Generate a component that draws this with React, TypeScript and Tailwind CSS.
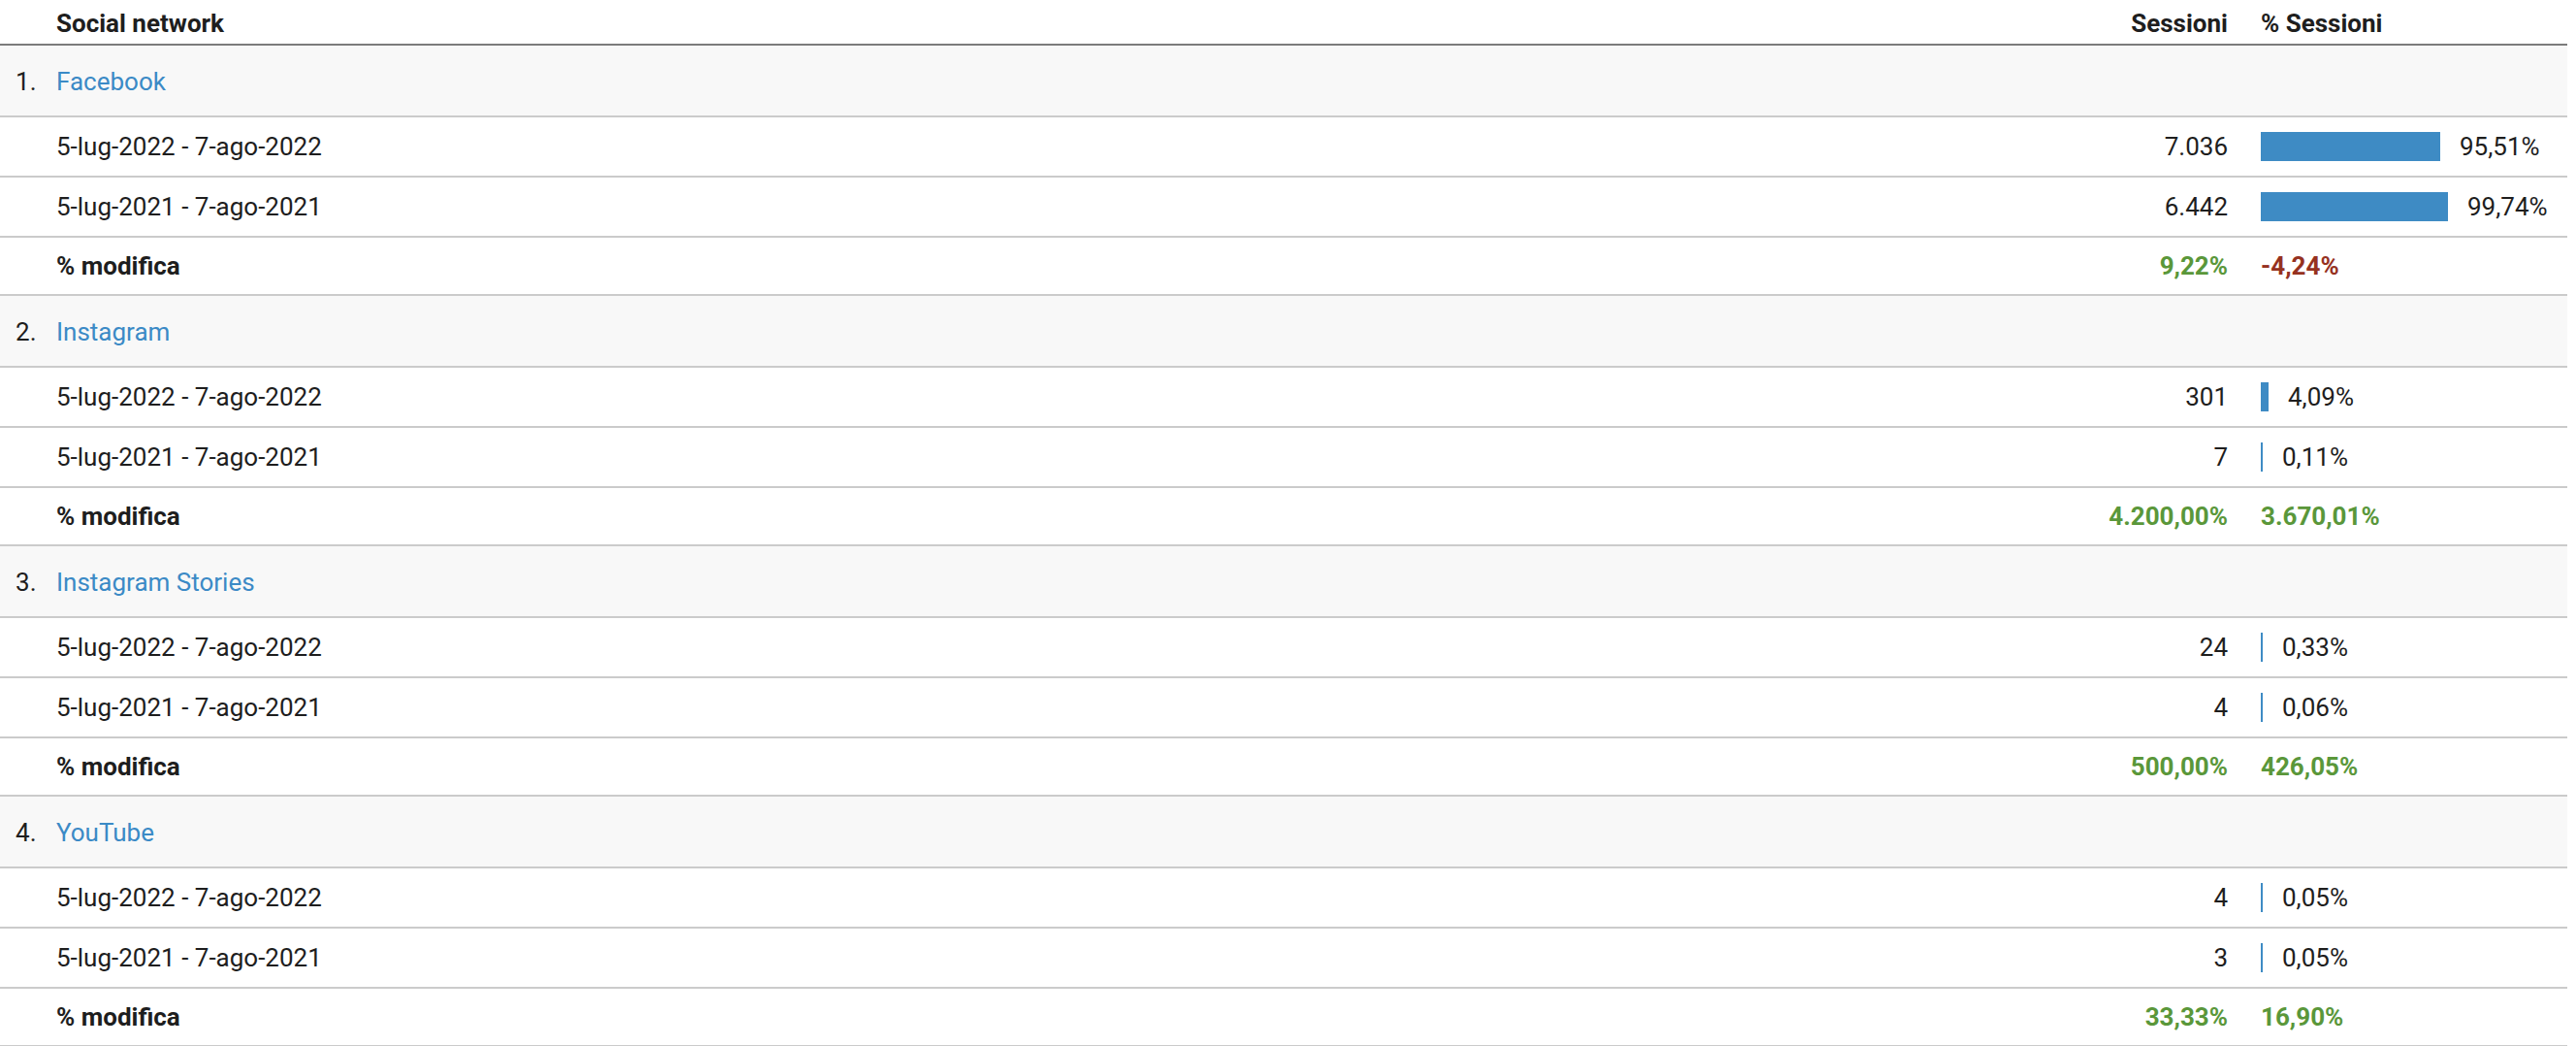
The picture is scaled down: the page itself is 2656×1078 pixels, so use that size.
import React from "react";

type DataRow = { label: string; sessions: string; pct: number; pctLabel: string };
type Group = {
  name: string;
  rows: DataRow[];
  changeSessions: string;
  changePct: string;
  changePctNegative?: boolean;
};

const groups: Group[] = [
  {
    name: "Facebook",
    rows: [
      { label: "5-lug-2022 - 7-ago-2022", sessions: "7.036", pct: 95.51, pctLabel: "95,51%" },
      { label: "5-lug-2021 - 7-ago-2021", sessions: "6.442", pct: 99.74, pctLabel: "99,74%" },
    ],
    changeSessions: "9,22%",
    changePct: "-4,24%",
    changePctNegative: true,
  },
  {
    name: "Instagram",
    rows: [
      { label: "5-lug-2022 - 7-ago-2022", sessions: "301", pct: 4.09, pctLabel: "4,09%" },
      { label: "5-lug-2021 - 7-ago-2021", sessions: "7", pct: 0.11, pctLabel: "0,11%" },
    ],
    changeSessions: "4.200,00%",
    changePct: "3.670,01%",
  },
  {
    name: "Instagram Stories",
    rows: [
      { label: "5-lug-2022 - 7-ago-2022", sessions: "24", pct: 0.33, pctLabel: "0,33%" },
      { label: "5-lug-2021 - 7-ago-2021", sessions: "4", pct: 0.06, pctLabel: "0,06%" },
    ],
    changeSessions: "500,00%",
    changePct: "426,05%",
  },
  {
    name: "YouTube",
    rows: [
      { label: "5-lug-2022 - 7-ago-2022", sessions: "4", pct: 0.05, pctLabel: "0,05%" },
      { label: "5-lug-2021 - 7-ago-2021", sessions: "3", pct: 0.05, pctLabel: "0,05%" },
    ],
    changeSessions: "33,33%",
    changePct: "16,90%",
  },
];

const FULL_BAR = 194;

function Bar({ pct }: { pct: number }) {
  const w = Math.max(2, Math.round((pct / 100) * FULL_BAR));
  return <div className="h-[30px] bg-[#3e8bc4] shrink-0" style={{ width: w }} />;
}

export default function App() {
  return (
    <div
      className="w-[2647px] bg-white text-[#1e1e1e] text-[26px] leading-none"
      style={{ fontFamily: "Roboto, 'Noto Sans', sans-serif" }}
    >
      {/* Header */}
      <div className="flex items-center h-[47px] border-b-2 border-[#7b7b7b] font-bold pt-[2px]">
        <div className="w-[58px] shrink-0" />
        <div className="flex-1">Social network</div>
        <div className="w-[300px] shrink-0 text-right pr-[34px]">Sessioni</div>
        <div className="w-[316px] shrink-0">% Sessioni</div>
      </div>

      {groups.map((g, gi) => (
        <div key={g.name}>
          {/* Group header */}
          <div className="flex items-center h-[74px] bg-[#f8f8f8] border-b-2 border-[#cbcbcb] pt-[1px]">
            <div className="w-[58px] shrink-0 pl-[16px]">{gi + 1}.</div>
            <div className="flex-1 text-[#3b8ac6]">{g.name}</div>
          </div>

          {g.rows.map((r, ri) => (
            <div key={ri} className="flex items-center h-[62px] border-b-2 border-[#cbcbcb]">
              <div className="w-[58px] shrink-0" />
              <div className="flex-1">{r.label}</div>
              <div className="w-[300px] shrink-0 text-right pr-[34px]">{r.sessions}</div>
              <div className="w-[316px] shrink-0 flex items-center gap-[20px]">
                <Bar pct={r.pct} />
                <span>{r.pctLabel}</span>
              </div>
            </div>
          ))}

          {/* % modifica */}
          <div className="flex items-center h-[60px] border-b-2 border-[#cbcbcb] font-bold">
            <div className="w-[58px] shrink-0" />
            <div className="flex-1">% modifica</div>
            <div className="w-[300px] shrink-0 text-right pr-[34px] text-[#5a973a]">{g.changeSessions}</div>
            <div
              className={
                g.changePctNegative
                  ? "w-[316px] shrink-0 text-[#96321f]"
                  : "w-[316px] shrink-0 text-[#5a973a]"
              }
            >
              {g.changePct}
            </div>
          </div>
        </div>
      ))}
    </div>
  );
}
